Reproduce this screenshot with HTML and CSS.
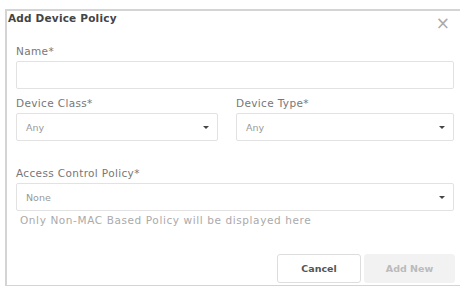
FILE: index.html
```html
<!DOCTYPE html>
<html lang="en">
<head>
  <meta charset="UTF-8">
  <title>Add Device Policy</title>
  <link rel="stylesheet" href="styles.css">
</head>
<body>
  <div class="dialog">
    <div class="dialog-header">
      <h3>Add Device Policy</h3>
      <span class="close">&times;</span>
    </div>
    <div class="dialog-body">
      <div class="field">
        <label>Name*</label>
        <input type="text" class="input">
      </div>
      <div class="row">
        <div class="field">
          <label>Device Class*</label>
          <div class="select"><span>Any</span><span class="caret"></span></div>
        </div>
        <div class="field">
          <label>Device Type*</label>
          <div class="select"><span>Any</span><span class="caret"></span></div>
        </div>
      </div>
      <div class="field policy">
        <label>Access Control Policy*</label>
        <div class="select"><span>None</span><span class="caret"></span></div>
        <div class="hint">Only Non-MAC Based Policy will be displayed here</div>
      </div>
    </div>
    <div class="dialog-footer">
      <button class="btn btn-cancel">Cancel</button>
      <button class="btn btn-add">Add New</button>
    </div>
  </div>
</body>
</html>
```

FILE: styles.css
```css
* { box-sizing: border-box; }
body {
  margin: 0;
  background: #fff;
  font-family: "DejaVu Sans", Verdana, sans-serif;
  color: #666;
}
.dialog {
  margin: 9px 0 0 5px;
  height: 277px;
  border-top: 2px solid #d4d4d4;
  border-left: 2px solid #d4d4d4;
  border-bottom: 1px solid #d4d4d4;
  display: flex;
  flex-direction: column;
}
.dialog-header {
  display: flex;
  justify-content: space-between;
  align-items: flex-start;
  padding: 0 10px 0 1px;
  height: 22px;
}
.dialog-header h3 {
  margin: 1px 0 0;
  font-size: 10.5px;
  font-weight: bold;
  letter-spacing: 0.2px;
  color: #444;
}
.close {
  font-size: 17px;
  line-height: 17px;
  color: #aaa;
  margin-top: 4px;
}
.dialog-body {
  padding: 12px 6px 0 9px;
  flex: 1;
}
.field label {
  display: block;
  font-size: 10.5px;
  letter-spacing: 0.35px;
  color: #777;
  margin-bottom: 4px;
}
.input, .select {
  width: 100%;
  height: 28px;
  border: 1px solid #e2e2e2;
  border-radius: 2px;
  background: #fff;
}
.row {
  display: flex;
  gap: 18px;
  margin-top: 8px;
}
.row .field { flex: 1; }
.row .field:first-child { flex: 0 0 202px; }
.select {
  display: flex;
  align-items: center;
  justify-content: space-between;
  padding: 0 8px 0 9px;
  font-size: 9.5px;
  color: #999;
}
.caret {
  width: 0;
  height: 0;
  border-left: 3px solid transparent;
  border-right: 3px solid transparent;
  border-top: 3px solid #444;
}
.policy { margin-top: 26px; }
.hint {
  font-size: 10.5px;
  letter-spacing: 0.6px;
  color: #aaa;
  margin: 3px 0 0 4px;
}
.dialog-footer {
  display: flex;
  justify-content: flex-end;
  gap: 3px;
  padding: 0 5px 2px 0;
}
.btn {
  height: 29px;
  font-family: inherit;
  font-size: 9.5px;
  font-weight: bold;
  border-radius: 3px;
  cursor: pointer;
}
.btn-cancel {
  width: 84px;
  background: #fff;
  border: 1px solid #ddd;
  color: #555;
}
.btn-add {
  width: 91px;
  background: #f2f2f2;
  border: 1px solid #f2f2f2;
  color: #bbb;
}
```
